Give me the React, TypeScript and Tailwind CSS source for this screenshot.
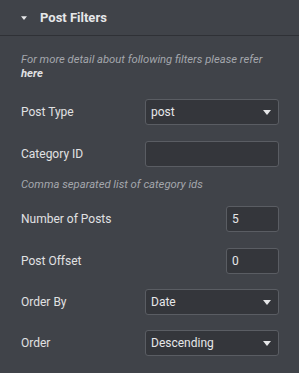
import React from "react";

const Caret = ({ className = "" }: { className?: string }) => (
  <svg width="8" height="5" viewBox="0 0 8 5" className={className}>
    <path d="M0 0 H8 L4 5 Z" fill="#e6e7e9" />
  </svg>
);

const Select = ({ value }: { value: string }) => (
  <div className="flex h-[26px] w-[134px] items-center justify-between rounded-[3px] border border-[#5a5d63] bg-[#34363b] pl-[5px] pr-[7px]">
    <span className="text-[12px] text-[#e6e7e9]">{value}</span>
    <Caret />
  </div>
);

const Row = ({ label, children, className = "" }: { label: string; children: React.ReactNode; className?: string }) => (
  <div className={`flex items-center justify-between ${className}`}>
    <span className="text-[12px] text-[#e0e1e3]">{label}</span>
    {children}
  </div>
);

export default function App() {
  return (
    <div
      className="h-[373px] w-[299px] bg-[#404349]"
      style={{ fontFamily: "Roboto, 'Liberation Sans', sans-serif" }}
    >
      <div className="flex h-[36px] items-center border-b border-[#2f3136] pl-[21px]">
        <Caret className="mr-[13px] h-[4px] w-[6px]" />
        <span className="text-[13px] font-bold text-[#e6e7e9]">Post Filters</span>
      </div>
      <div className="px-[20px] pl-[21px]">
        <p className="mt-[17px] text-[11.25px] italic leading-[14px] text-[#a4a7ad]">
          For more detail about following filters please refer{" "}
          <span className="font-bold text-[#e0e1e3]">here</span>
        </p>
        <Row label="Post Type" className="mt-[18px]">
          <Select value="post" />
        </Row>
        <Row label="Category ID" className="mt-[16px]">
          <div className="h-[26px] w-[134px] rounded-[3px] border border-[#5a5d63] bg-[#34363b]" />
        </Row>
        <p className="mt-[11px] text-[11.25px] italic leading-[14px] text-[#a4a7ad]">
          Comma separated list of category ids
        </p>
        <Row label="Number of Posts" className="mt-[14px]">
          <div className="flex h-[26px] w-[53px] items-center rounded-[3px] border border-[#5a5d63] bg-[#34363b] pl-[5px] text-[12px] text-[#e6e7e9]">
            5
          </div>
        </Row>
        <Row label="Post Offset" className="mt-[16px]">
          <div className="flex h-[26px] w-[53px] items-center rounded-[3px] border border-[#5a5d63] bg-[#34363b] pl-[5px] text-[12px] text-[#e6e7e9]">
            0
          </div>
        </Row>
        <Row label="Order By" className="mt-[15px]">
          <Select value="Date" />
        </Row>
        <Row label="Order" className="mt-[15px]">
          <Select value="Descending" />
        </Row>
      </div>
    </div>
  );
}
